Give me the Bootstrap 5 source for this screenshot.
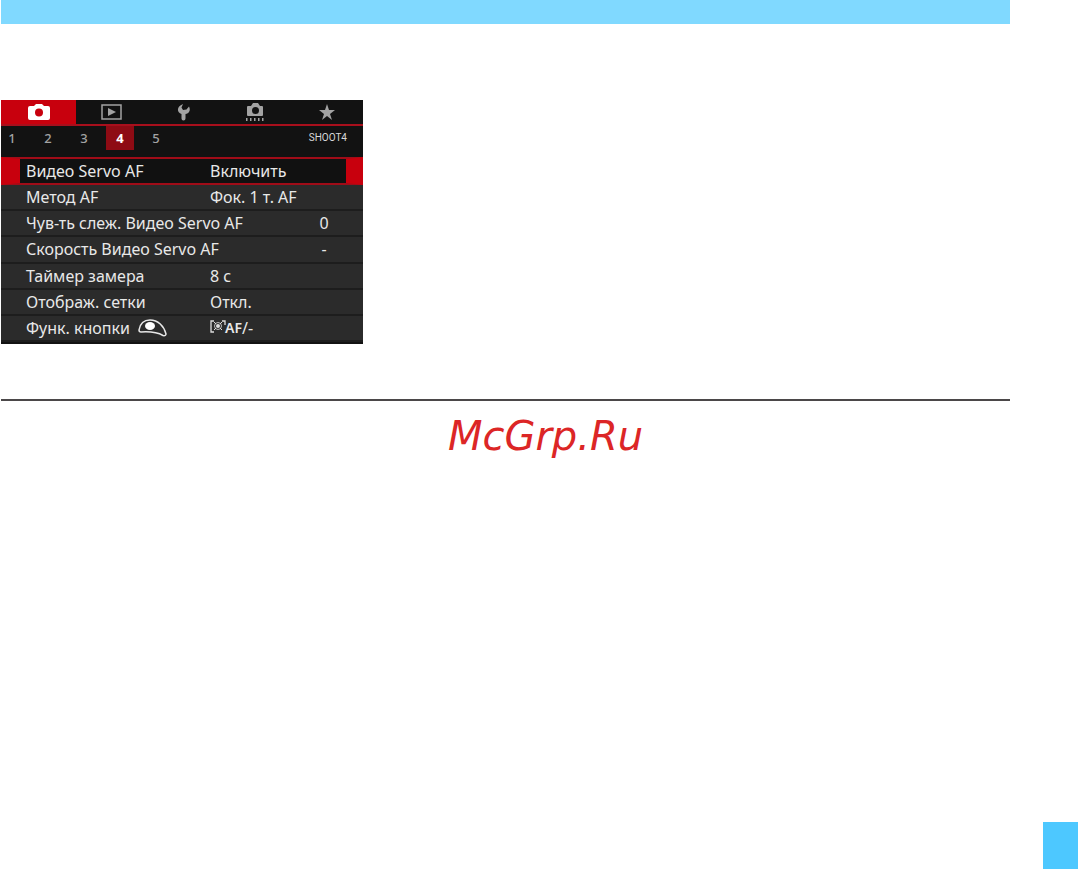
<!DOCTYPE html>
<html lang="ru">
<head>
<meta charset="utf-8">
<meta name="viewport" content="width=device-width, initial-scale=1">
<title>Видео Servo AF</title>
<link href="https://cdn.jsdelivr.net/npm/bootstrap@5.3.0/dist/css/bootstrap.min.css" rel="stylesheet">
<style>
body { background: #fff; font-family: "Noto Sans", "Open Sans", sans-serif; }
.sheet { padding: 0 68px 0 1px; }
.top-band { height: 24px; background: #80d9ff; }
.camera-menu { width: 362px; margin-top: 76px; background: #121212; color: #e8e8e8; padding-bottom: 2px; }
.menu-tabs { height: 26px; border-bottom: 2px solid #a80f1c; }
.menu-tabs button, .menu-pages button { border: 0; padding: 0; background: transparent; color: #a3a3a3; }
.menu-tabs button { flex: 1 1 0; }
.menu-tabs button.active { flex: 0 0 75px; background: #c8000d; color: #fff; }
.menu-tabs svg { display: block; margin: auto; }
.menu-pages { height: 31px; padding-right: 16px; font-size: 13px; line-height: 24px; }
.menu-pages button { width: 28px; height: 24px; font-weight: 500; }
.menu-pages button.active { background: #8e0b14; color: #fff; font-weight: 700; }
.page-buttons { gap: 8px; margin-left: -3px; }
.page-name { font-family: Roboto, sans-serif; font-size: 10px; color: #d8d8d8; }
.settings { height: 185px; font-size: 16px; line-height: 24px; }
.setting { flex: 1 1 0; min-height: 0; background: #2b2b2b; border-bottom: 2px solid #1d1d1d; padding: 0 17px 0 25px; white-space: nowrap; }
.setting.chosen { background: #111; border: solid #c8000d; border-width: 2px 17px 2px 19px; border-top-color: #a00c18; border-bottom-color: #a00c18; padding: 0 0 0 6px; }
.setting-label { width: 184px; flex: none; }
.setting-label.wide { width: auto; flex: 1; }
.setting-number { width: 44px; text-align: center; }
.metering { margin-right: -3px; }
.af-text { font-size: 14px; font-weight: 600; }
.rule { height: 2px; margin: 55px 0 0; border: 0; background: #4b4849; opacity: 1; }
.site-name { margin: 11px 0 0; padding-left: 80px; font: italic 40px/48px "DejaVu Sans", sans-serif; color: #dc2626; }
.page-mark { width: 35px; height: 47px; background: #4dc8ff; }
</style>
</head>
<body class="d-flex flex-column min-vh-100">
<main class="sheet">
  <div class="top-band"></div>
  <section class="camera-menu" aria-label="Меню камеры">
    <nav class="menu-tabs d-flex" aria-label="Вкладки">
      <button type="button" class="active" aria-label="Съемка"><svg width="22" height="18" viewBox="0 0 22 18"><path fill="currentColor" d="M2 3h4l2-2h6l2 2h4q2 0 2 2v10q0 2-2 2H2q-2 0-2-2V5q0-2 2-2z"/><circle cx="11" cy="9.500" r="4" fill="#c8000d"/></svg></button>
      <button type="button" aria-label="Просмотр"><svg width="21" height="16" viewBox="0 0 21 16"><rect x="1" y="1" width="19" height="14" fill="none" stroke="currentColor" stroke-width="1.500"/><path fill="currentColor" d="M7 4l8 4-8 4z"/></svg></button>
      <button type="button" aria-label="Настройка"><svg width="18" height="18" viewBox="0 0 18 18"><path fill="currentColor" d="M8 1 6.500 4.500 8 7l3.500-.5L14 3.500C16 7.500 14 10.500 10.500 11v4.500q0 2-2 2t-2-2V11C2 9.500 1 4 8 1z"/></svg></button>
      <button type="button" aria-label="Пользовательские функции"><svg width="20" height="20" viewBox="0 0 20 20"><path fill="currentColor" fill-rule="evenodd" d="M3 4h3l2-3h5l2 3h2q1 0 1 1v8q0 1-1 1H3q-1 0-1-1V5q0-1 1-1zM10.500 5a3.500 3.500 0 1 0 0 7 3.500 3.500 0 0 0 0-7z"/><path d="M1 17.500h18" stroke="currentColor" stroke-width="3" stroke-dasharray="1.500 2.500"/></svg></button>
      <button type="button" aria-label="Мое меню"><svg width="16" height="16" viewBox="0 0 16 16"><path fill="currentColor" d="M8 0l2 6h6l-5 4 2 6-5-4-5 4 2-6-5-4h6z"/></svg></button>
    </nav>
    <div class="menu-pages d-flex justify-content-between">
      <div class="page-buttons d-flex">
        <button type="button">1</button><button type="button">2</button><button type="button">3</button><button type="button" class="active">4</button><button type="button">5</button>
      </div>
      <span class="page-name">SHOOT4</span>
    </div>
    <div class="settings d-flex flex-column">
      <div class="setting chosen d-flex align-items-center"><span class="setting-label">Видео Servo AF</span><span>Включить</span></div>
      <div class="setting d-flex align-items-center"><span class="setting-label">Метод AF</span><span>Фок. 1 т. AF</span></div>
      <div class="setting d-flex align-items-center"><span class="setting-label wide">Чув-ть слеж. Видео Servo AF</span><span class="setting-number">0</span></div>
      <div class="setting d-flex align-items-center"><span class="setting-label wide">Скорость Видео Servo AF</span><span class="setting-number">-</span></div>
      <div class="setting d-flex align-items-center"><span class="setting-label">Таймер замера</span><span>8 с</span></div>
      <div class="setting d-flex align-items-center"><span class="setting-label">Отображ. сетки</span><span>Откл.</span></div>
      <div class="setting d-flex align-items-center"><span class="setting-label d-flex align-items-center gap-2">Функ. кнопки
        <svg width="29" height="18" viewBox="0 0 29 18" aria-hidden="true"><path d="M1 11C2 5 6 1 12 1c8 0 14 6 16 14 0 1-1 2-3 1.500C19 13 11 12.500 3 13q-2 0-2-2z" fill="none" stroke="#e8e8e8" stroke-width="1.500"/><ellipse cx="12" cy="7" rx="5" ry="4" fill="#fff"/></svg></span>
        <span class="d-flex align-items-center"><svg class="metering" width="18" height="15" viewBox="1 0 18 15" aria-hidden="true"><path d="M5 1H2v11h3M13 1h3v4" fill="none" stroke="#ddd" stroke-width="1.300"/><circle cx="9" cy="6" r="3.500" fill="none" stroke="#bbb"/><circle cx="9" cy="6" r="2" fill="#ddd"/><path d="M5 2l2 2M13 2l-2 2M5 10l2-2M13 10l-2-2" stroke="#ddd"/></svg><span class="af-text">AF</span>/-</span></div>
    </div>
  </section>
  <hr class="rule">
  <p class="site-name text-center">McGrp.Ru</p>
</main>
<div class="page-mark mt-auto ms-auto"></div>
<script src="https://cdn.jsdelivr.net/npm/bootstrap@5.3.0/dist/js/bootstrap.bundle.min.js"></script>
</body>
</html>
